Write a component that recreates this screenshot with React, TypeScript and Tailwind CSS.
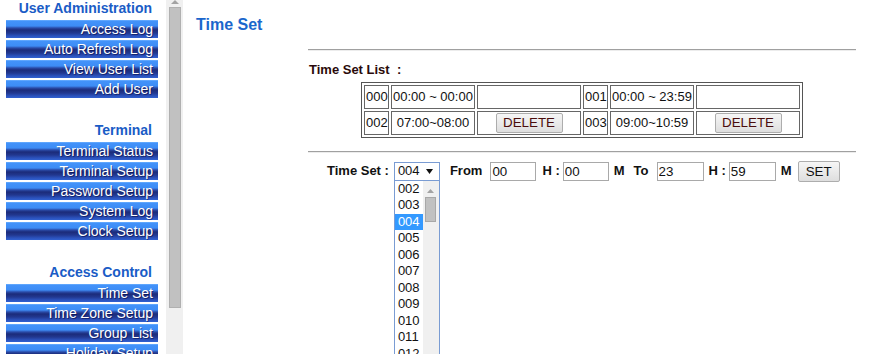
import React from "react";

const btn =
  "block h-[18px] mb-[2px] w-[152px] text-right pr-[5px] text-white text-[14px] leading-[18px] whitespace-nowrap overflow-hidden bg-[linear-gradient(to_bottom,#7ab8ff_0px,#4393fa_1px,#3d8cf5_6px,#2a4aa6_8px,#1b2b7a_10px,#22388f_13px,#2b52bd_16px,#3060d0_18px)] [text-shadow:1px_1px_0_rgba(0,0,50,0.45)]";
const head =
  "h-5 w-[152px] text-right pr-[6px] text-[14px] leading-[17px] font-bold text-[#1a5cc6] whitespace-nowrap";

function Section({ title, items, last }: { title: string; items: string[]; last?: boolean }) {
  return (
    <div className={last ? "" : "mb-[24px]"}>
      <div className={head}>{title}</div>
      {items.map((t) => (
        <div key={t} className={btn}>
          {t}
        </div>
      ))}
    </div>
  );
}

const label = "text-[13px] font-bold text-[#111] whitespace-nowrap";
const input =
  "h-[19px] border border-[#a9a9a9] bg-white text-[13.33px] leading-[17px] pl-[1px] text-[#111]";
const cell = "border border-[#666] p-[1px] text-[13px] text-[#111] whitespace-nowrap";
const delBtn =
  "w-[67px] h-[20px] border border-[#adadad] rounded-[2px] bg-[linear-gradient(to_bottom,#f6f6f6,#dedede)] text-[13.33px] leading-[18px] text-[#4a0d0d]";

export default function App() {
  const items = ["002", "003", "004", "005", "006", "007", "008", "009", "010", "011", "012"];
  return (
    <div className="flex w-[869px] h-[354px] overflow-hidden bg-white font-['Liberation_Sans',Arial,sans-serif]">
      {/* left nav */}
      <div className="w-[166px] shrink-0 pl-[6px]">
        <Section title="User Administration" items={["Access Log", "Auto Refresh Log", "View User List", "Add User"]} />
        <Section
          title="Terminal"
          items={["Terminal Status", "Terminal Setup", "Password Setup", "System Log", "Clock Setup"]}
        />
        <Section
          title="Access Control"
          items={["Time Set", "Time Zone Setup", "Group List", "Holiday Setup"]}
          last
        />
      </div>
      {/* scrollbar */}
      <div className="relative w-[17px] shrink-0 bg-[#f0f0f0]">
        <svg className="absolute left-[5px] top-0" width="8" height="4" viewBox="0 0 8 4">
          <path d="M0 4 L4 0 L8 4 Z" fill="#a3a3a3" />
        </svg>
        <div className="absolute left-[3px] top-[7px] w-[12px] h-[301px] bg-[#c1c1c1] border border-[#b0b0b0]" />
      </div>
      {/* content */}
      <div className="flex-1 pt-[16px] pl-[13px]">
        <div className="text-[16px] leading-[18px] font-bold text-[#1a66cc]">Time Set</div>
        <div className="ml-[112px] w-[548px] mt-[15px]">
          <div className="border-t border-t-[#a0a0a0] border-b border-b-[#ececec]" />
          <div className="mt-[11px] ml-[1px] text-[13px] leading-[15px] font-bold text-[#2a0a0a] whitespace-pre">
            {"Time Set List  :"}
          </div>
          <table className="ml-[53px] mt-[5px] w-[441px] table-fixed border border-[#555] border-separate border-spacing-[2px]">
            <tbody>
              <tr>
                <td className={cell + " w-[25px] h-[21px]"}>000</td>
                <td className={cell + " w-[84px] h-[21px]"}>00:00 ~ 00:00</td>
                <td className={cell + " w-[104px] h-[21px]"}></td>
                <td className={cell + " w-[25px] h-[21px]"}>001</td>
                <td className={cell + " w-[84px] h-[21px]"}>00:00 ~ 23:59</td>
                <td className={cell + " w-[104px] h-[21px]"}></td>
              </tr>
              <tr>
                <td className={cell + " h-[24px]"}>002</td>
                <td className={cell + " h-[24px] text-center"}>07:00~08:00</td>
                <td className={cell + " h-[24px] text-center"}>
                  <button className={delBtn}>DELETE</button>
                </td>
                <td className={cell + " h-[24px]"}>003</td>
                <td className={cell + " h-[24px] text-center"}>09:00~10:59</td>
                <td className={cell + " h-[24px] text-center"}>
                  <button className={delBtn}>DELETE</button>
                </td>
              </tr>
            </tbody>
          </table>
          <div className="mt-[13px] border-t border-t-[#a0a0a0] border-b border-b-[#ececec]" />
          <div className="mt-[8px] ml-[19px] flex items-center h-[21px]">
            <span className={label}>Time Set :</span>
            <div className="relative ml-[5px]">
              <div className="h-[19px] w-[46px] border border-[#7a9cd3] bg-white flex items-center justify-between pl-[3px] pr-[6px] text-[13px] text-[#111]">
                <span>004</span>
                <svg width="7" height="5" viewBox="0 0 7 5">
                  <path d="M0 0 L7 0 L3.5 5 Z" fill="#111" />
                </svg>
              </div>
              <div className="absolute left-0 top-[19px] w-[46px] h-[200px] border border-t-0 border-[#7a9cd3] bg-white flex">
                <div className="w-[29px]">
                  {items.map((n) => (
                    <div
                      key={n}
                      className={
                        "h-[16.5px] leading-[16.5px] pl-[3px] text-[13px] " +
                        (n === "004" ? "bg-[#3399ff] text-white" : "text-[#111]")
                      }
                    >
                      {n}
                    </div>
                  ))}
                </div>
                <div className="relative w-[16px] bg-[#f0f0f0]">
                  <svg className="absolute left-[4px] top-[8px]" width="7" height="4" viewBox="0 0 7 4">
                    <path d="M0 4 L3.5 0 L7 4 Z" fill="#a3a3a3" />
                  </svg>
                  <div className="absolute left-[2px] top-[16px] w-[11px] h-[25px] bg-[#c1c1c1] border border-[#a8a8a8]" />
                </div>
              </div>
            </div>
            <span className={label + " ml-[10px]"}>From</span>
            <input className={input + " w-[46px] ml-[8px]"} defaultValue="00" readOnly />
            <span className={label + " ml-[6px]"}>H :</span>
            <input className={input + " w-[46px] ml-[3px]"} defaultValue="00" readOnly />
            <span className={label + " ml-[5px]"}>M</span>
            <span className={label + " ml-[9px]"}>To</span>
            <input className={input + " w-[47px] ml-[8px]"} defaultValue="23" readOnly />
            <span className={label + " ml-[5px]"}>H :</span>
            <input className={input + " w-[47px] ml-[3px]"} defaultValue="59" readOnly />
            <span className={label + " ml-[5px]"}>M</span>
            <button className="ml-[6px] w-[42px] h-[21px] border border-[#adadad] rounded-[2px] bg-[linear-gradient(to_bottom,#f6f6f6,#dedede)] text-[13.33px] leading-[19px] text-[#111]">
              SET
            </button>
          </div>
        </div>
      </div>
    </div>
  );
}
